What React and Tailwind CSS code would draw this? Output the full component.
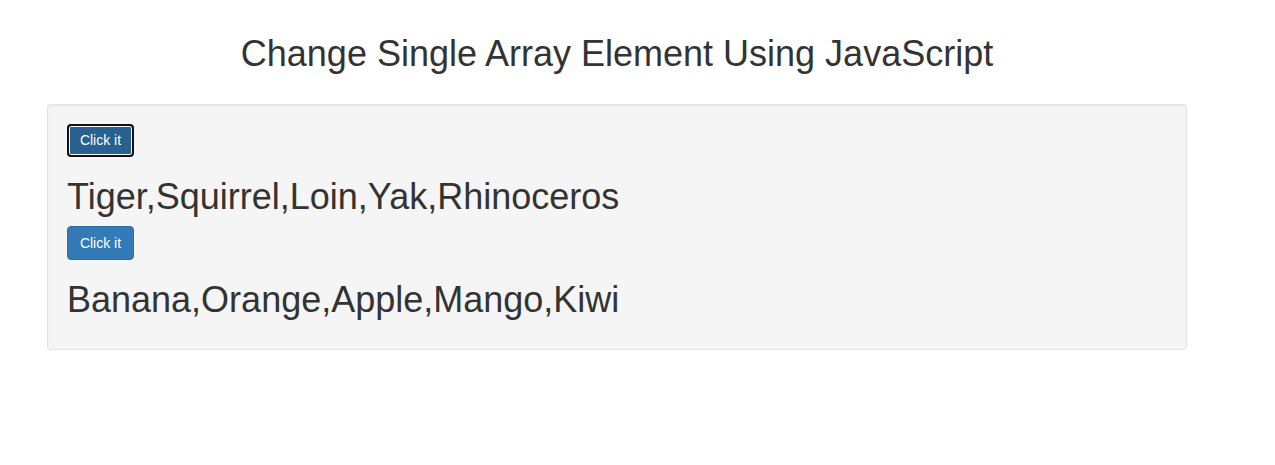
import React, { useState } from 'react';

const animals = ["Tiger", "Squirrel", "Loin", "Yak", "Rhinoceros"];
const fruits = ["Banana", "Orange", "Apple", "Mango", "Kiwi"];

export default function App() {
  const [first, setFirst] = useState(animals);
  const [second, setSecond] = useState(fruits);

  return (
    <div className="w-full h-[465px] overflow-hidden bg-white text-[#333] font-['Liberation_Sans',Arial,sans-serif] text-sm leading-5 pt-[34px]">
      <div className="ml-[47px] w-[1140px]">
        {/* Title */}
        <h1 className="m-0 text-center text-[36px] leading-[1.1] font-normal">
          Change Single Array Element Using JavaScript
        </h1>

        {/* Well */}
        <div className="mt-[30px] bg-[#f5f5f5] border border-[#e3e3e3] rounded shadow-[inset_0_1px_1px_rgba(0,0,0,0.05)] p-[19px] min-h-[246px]">
          <button
            onClick={() => setFirst(a => a.map((x, i) => (i === 2 ? "Lion" : x)))}
            className="inline-flex items-center justify-center w-[67px] h-[33px] rounded bg-[#286090] border-2 border-[#111] shadow-[inset_0_0_0_1px_#fff] text-white text-sm"
          >
            Click it
          </button>
          <h1 className="mt-[20px] mb-[10px] text-[36px] leading-[1.1] font-normal">
            {first.join(",")}
          </h1>

          <button
            onClick={() => setSecond(a => a.map((x, i) => (i === 0 ? "Grapes" : x)))}
            className="inline-flex items-center justify-center w-[67px] h-[34px] rounded bg-[#337ab7] border border-[#2e6da4] text-white text-sm"
          >
            Click it
          </button>
          <h1 className="mt-[20px] mb-[10px] text-[36px] leading-[1.1] font-normal">
            {second.join(",")}
          </h1>
        </div>
      </div>
    </div>
  );
}
